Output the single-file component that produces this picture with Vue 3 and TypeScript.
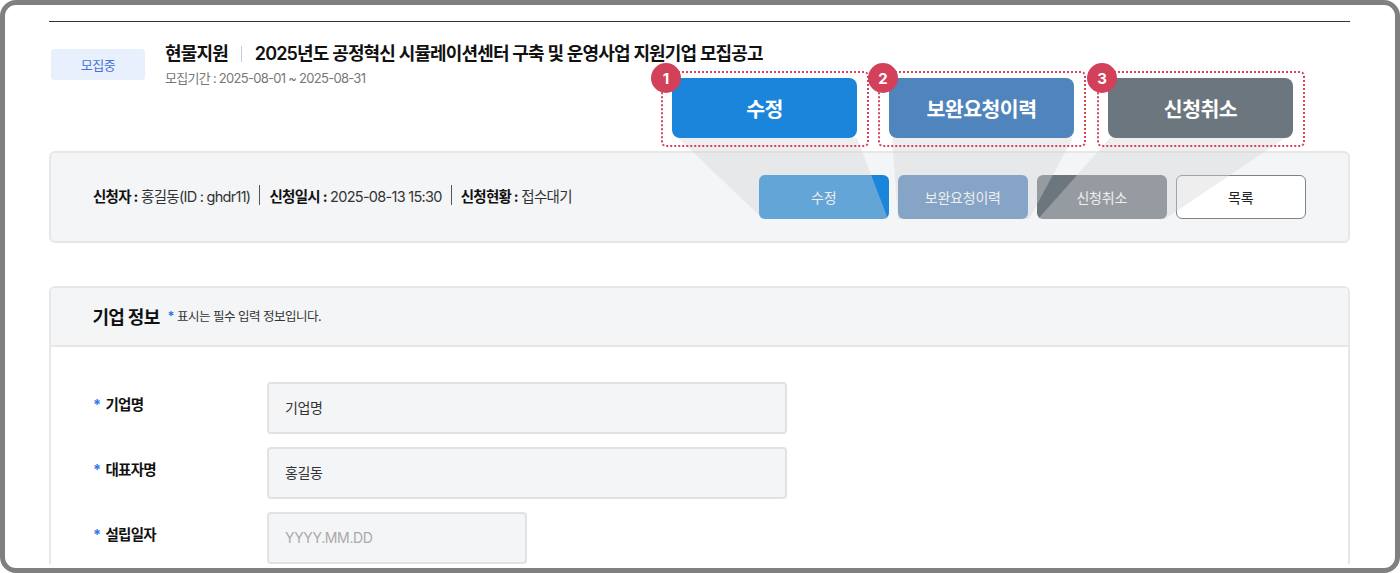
<template>
  <div class="page">
    <div class="frame">
      <div class="head">
        <span class="status">모집중</span>
        <div class="head-text">
          <h1 class="title">
            <span>현물지원</span>
            <i class="title-sep"></i>
            <span>2025년도 공정혁신 시뮬레이션센터 구축 및 운영사업 지원기업 모집공고</span>
          </h1>
          <p class="period">모집기간 : 2025-08-01 ~ 2025-08-31</p>
        </div>
      </div>

      <div class="apply-bar">
        <div class="apply-info">
          <span><b>신청자 :</b> 홍길동(ID : ghdr11)</span>
          <i class="info-sep"></i>
          <span><b>신청일시 :</b> 2025-08-13 15:30</span>
          <i class="info-sep"></i>
          <span><b>신청현황 :</b> 접수대기</span>
        </div>
        <div class="apply-actions">
          <button class="btn btn-blue" type="button">수정</button>
          <button class="btn btn-steel" type="button">보완요청이력</button>
          <button class="btn btn-gray" type="button">신청취소</button>
          <button class="btn btn-line" type="button">목록</button>
        </div>
      </div>

      <section class="card">
        <div class="card-head">
          <h2>기업 정보</h2>
          <p><em>*</em> 표시는 필수 입력 정보입니다.</p>
        </div>
        <div class="card-body">
          <div v-for="field in fields" :key="field.label" class="row">
            <label class="row-label"><em>*</em>{{ field.label }}</label>
            <input
              class="input"
              :class="{ short: field.short }"
              type="text"
              readonly
              :value="field.value"
              :placeholder="field.placeholder"
            >
          </div>
        </div>
      </section>
    </div>

    <!-- 안내 오버레이 -->
    <div class="guide">
      <svg class="beams" width="1400" height="573" viewBox="0 0 1400 573">
        <polygon v-for="beam in beams" :key="beam" :points="beam" fill="rgba(213,213,213,.4)" />
      </svg>
      <div
        v-for="item in callouts"
        :key="item.no"
        class="callout"
        :style="{ left: item.x + 'px' }"
      >
        <div class="callout-btn" :style="{ background: item.color }">{{ item.text }}</div>
        <span class="callout-no">{{ item.no }}</span>
      </div>
    </div>
  </div>
</template>

<script setup lang="ts">
interface Field {
  label: string;
  value: string;
  placeholder?: string;
  short?: boolean;
}

interface Callout {
  no: number;
  x: number;
  text: string;
  color: string;
}

const fields: Field[] = [
  { label: '기업명', value: '기업명' },
  { label: '대표자명', value: '홍길동' },
  { label: '설립일자', value: '', placeholder: 'YYYY.MM.DD', short: true }
];

const callouts: Callout[] = [
  { no: 1, x: 661, text: '수정', color: '#1a85da' },
  { no: 2, x: 878, text: '보완요청이력', color: '#5084bd' },
  { no: 3, x: 1097, text: '신청취소', color: '#6c767e' }
];

const beams: string[] = [
  '678,138 857,138 888,219 762,219 759,215',
  '892,138 1073,138 1029,219 898,219',
  '1110,138 1285,138 1165,219 1038,219'
];
</script>

<style>
body {
  background: #fff;
}
</style>

<style scoped>
.page {
  position: relative;
  width: 1400px;
  height: 573px;
  overflow: hidden;
  background: #fff;
  font-family: Inter, "Noto Sans CJK KR", sans-serif;
  color: #222;
}

.frame {
  box-sizing: border-box;
  height: 573px;
  padding: 16px 45px 0 44px;
  overflow: hidden;
  background: #fff;
  border: 5px solid #808080;
  border-radius: 16px;
}

.head {
  display: flex;
  align-items: flex-start;
  height: 130px;
  box-sizing: border-box;
  padding: 27px 0 0 2px;
  border-top: 1px solid #333;
}

.status {
  display: flex;
  align-items: center;
  justify-content: center;
  width: 94px;
  height: 31px;
  padding-bottom: 1px;
  box-sizing: border-box;
  background: #e9f0fd;
  border-radius: 3px;
  font-size: 13px;
  letter-spacing: -0.5px;
  color: #4673d6;
}

.head-text {
  margin-left: 20px;
  margin-top: -8px;
}

.title {
  display: flex;
  align-items: center;
  margin: 0;
  font-size: 18px;
  line-height: 26px;
  font-weight: 600;
  letter-spacing: -0.85px;
  color: #111;
}

.title-sep {
  width: 1px;
  height: 16px;
  margin: 0 13px;
  background: #ccc;
}

.period {
  margin: 2px 0 0;
  font-size: 13px;
  line-height: 18px;
  letter-spacing: -0.72px;
  color: #777;
}

.apply-bar {
  display: flex;
  align-items: center;
  justify-content: space-between;
  box-sizing: border-box;
  height: 92px;
  padding: 0 43px 0 42px;
  background: #f4f5f7;
  border: 2px solid #e7e7e7;
  border-radius: 6px;
}

.apply-info {
  display: flex;
  align-items: center;
  margin-top: -4px;
  font-size: 14.5px;
  letter-spacing: -0.72px;
  color: #333;
}

.apply-info b {
  font-weight: 700;
  color: #111;
}

.info-sep {
  width: 1px;
  height: 20px;
  margin: 0 9px;
  background: #555;
}

.apply-actions {
  display: flex;
  gap: 8.5px;
  margin-top: -1px;
  margin-right: -1px;
}

.btn {
  box-sizing: border-box;
  width: 130.5px;
  height: 44px;
  padding: 0;
  border: 1px solid transparent;
  border-radius: 6px;
  font-family: inherit;
  font-size: 14px;
  letter-spacing: -0.2px;
  color: #fff;
}

.btn-blue {
  background: #1a85da;
}

.btn-steel {
  background: #5084bd;
}

.btn-gray {
  background: #6c767e;
}

.btn-line {
  background: #fff;
  border-color: #7d8389;
  color: #222;
}

.card {
  margin-top: 43px;
  border: 2px solid #e7e7e7;
  border-radius: 6px 6px 0 0;
  border-bottom: 0;
  background: #fff;
}

.card-head {
  display: flex;
  align-items: center;
  box-sizing: border-box;
  height: 59px;
  padding: 0 42px 2px 41.5px;
  background: #f4f5f7;
  border-bottom: 2px solid #e7e7e7;
  border-radius: 4px 4px 0 0;
}

.card-head h2 {
  margin: 0;
  font-size: 18px;
  font-weight: 700;
  letter-spacing: -0.7px;
  color: #111;
}

.card-head p {
  margin: 0 0 0 8px;
  font-size: 12.5px;
  letter-spacing: -0.5px;
  color: #333;
}

em {
  font-style: normal;
  font-weight: 700;
  color: #2b78ee;
}

.card-body {
  display: flex;
  flex-direction: column;
  gap: 13px;
  padding: 35px 0 0 42px;
}

.row {
  display: flex;
  align-items: flex-start;
}

.row-label {
  width: 174px;
  padding-top: 13px;
  font-size: 14.5px;
  line-height: 20px;
  font-weight: 700;
  letter-spacing: -0.7px;
  color: #111;
}

.row-label em {
  margin: 0 5px 0 0;
}

.input {
  box-sizing: border-box;
  width: 520px;
  height: 52px;
  padding: 0 16px 2px;
  background: #f4f5f7;
  border: 2px solid #e2e2e2;
  border-radius: 4px;
  outline: none;
  font-family: inherit;
  font-size: 14px;
  letter-spacing: -0.35px;
  color: #333;
}

.input.short {
  width: 260px;
}

.input::placeholder {
  color: #aaa;
}

.guide {
  position: absolute;
  inset: 0;
  pointer-events: none;
}

.beams {
  position: absolute;
  top: 0;
  left: 0;
}

.callout {
  position: absolute;
  top: 71px;
  box-sizing: border-box;
  width: 208px;
  height: 76px;
  padding: 7px 0 0 11px;
  border: 2px dotted #d5455b;
  border-radius: 5px;
}

.callout-btn {
  display: flex;
  align-items: center;
  justify-content: center;
  width: 185px;
  height: 60px;
  margin-top: -2px;
  margin-left: -2px;
  border-radius: 8px;
  font-size: 20.5px;
  font-weight: 600;
  letter-spacing: -0.5px;
  color: #fff;
}

.callout-no {
  position: absolute;
  top: -10px;
  left: -12px;
  display: flex;
  align-items: center;
  justify-content: center;
  width: 30px;
  height: 30px;
  background: #d2405a;
  border-radius: 50%;
  font-size: 15px;
  font-weight: 700;
  color: #fff;
}
</style>
